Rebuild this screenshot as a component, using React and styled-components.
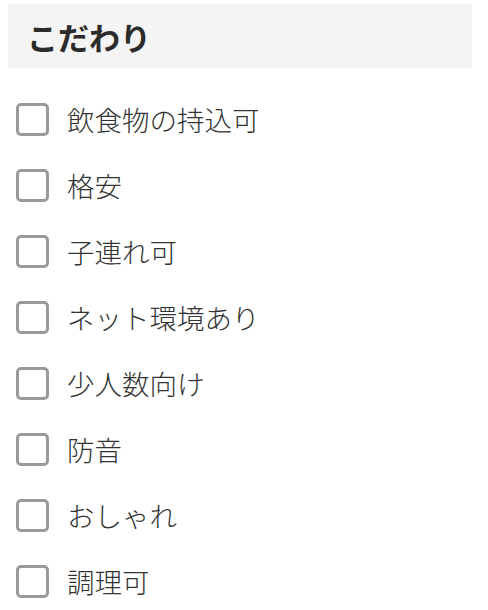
import React from "react";
import styled, { createGlobalStyle } from "styled-components";

const Global = createGlobalStyle`
  html, body { margin: 0; padding: 0; background: #fff; }
  body { font-family: "Noto Sans CJK JP", "Noto Sans", sans-serif; color: #333; }
`;

const Panel = styled.section`
  padding: 4px 16px 0 8px;
`;

const Heading = styled.h2`
  margin: 0;
  height: 64px;
  display: flex;
  align-items: center;
  padding-left: 19px;
  background: #f4f4f4;
  font-size: 31px;
  font-weight: 700;
  color: #2b2b2b;
`;

const List = styled.ul`
  list-style: none;
  margin: 0;
  padding: 35px 0 0 8px;
  display: flex;
  flex-direction: column;
  gap: 33px;
`;

const Item = styled.li`
  display: flex;
  align-items: center;
  height: 33px;
`;

const Box = styled.span`
  box-sizing: border-box;
  width: 33px;
  height: 33px;
  border: 3px solid #9a9a9a;
  border-radius: 5px;
  background: #fff;
  flex: none;
`;

const Label = styled.span`
  margin-left: 18px;
  font-size: 27.5px;
  font-weight: 300;
  color: #333;
  line-height: 1;
`;

const items = ["飲食物の持込可", "格安", "子連れ可", "ネット環境あり", "少人数向け", "防音", "おしゃれ", "調理可"];

export default function App() {
  return (
    <>
      <Global />
      <Panel>
        <Heading>こだわり</Heading>
        <List>
          {items.map((t) => (
            <Item key={t}>
              <Box />
              <Label>{t}</Label>
            </Item>
          ))}
        </List>
      </Panel>
    </>
  );
}
